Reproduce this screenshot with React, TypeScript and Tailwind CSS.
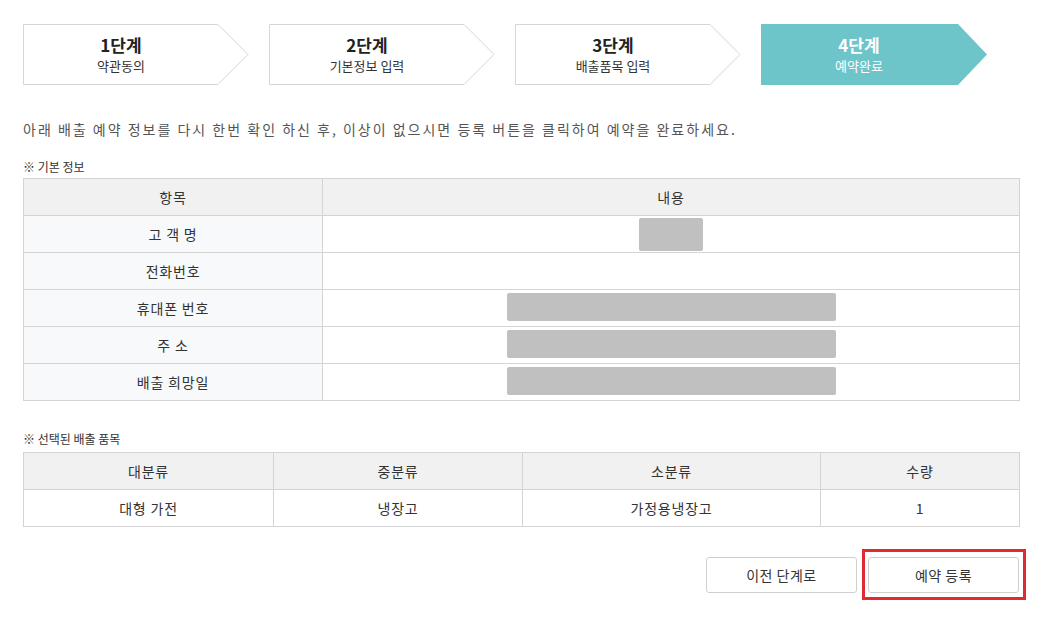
import React from 'react';

const steps = [
  { no: '1단계', label: '약관동의', active: false },
  { no: '2단계', label: '기본정보 입력', active: false },
  { no: '3단계', label: '배출품목 입력', active: false },
  { no: '4단계', label: '예약완료', active: true },
];

const Step: React.FC<{ no: string; label: string; active: boolean }> = ({ no, label, active }) => (
  <div className="relative w-[226px] h-[61px]">
    <svg className="absolute inset-0" width="226" height="61" viewBox="0 0 226 61">
      {active ? (
        <polygon points="0,0 197,0 226,30.5 197,61 0,61" fill="#6dc4c9" />
      ) : (
        <polygon
          points="0.5,0.5 195,0.5 225,30.5 195,60.5 0.5,60.5"
          fill="#ffffff"
          stroke="#d6d6d6"
          strokeWidth="1"
        />
      )}
    </svg>
    <div className={`relative flex flex-col items-center justify-center w-[196px] h-full ${active ? 'text-white' : 'text-[#222]'}`}>
      <span className="text-[17px] font-semibold leading-[22px]">{no}</span>
      <span className={`text-[13px] leading-[18px] mt-[1px] ${active ? 'text-white' : 'text-[#333]'}`}>{label}</span>
    </div>
  </div>
);

const wideBlock = <div className="w-[329px] h-[28px] bg-[#c0c0c0] rounded-[2px] mx-auto -mt-[3px]" />;

const basicRows: { label: string; block: React.ReactNode }[] = [
  { label: '고 객 명', block: <div className="w-[64px] h-[33px] bg-[#c0c0c0] rounded-[2px] mx-auto mt-[1px]" /> },
  { label: '전화번호', block: null },
  { label: '휴대폰 번호', block: wideBlock },
  { label: '주 소', block: wideBlock },
  { label: '배출 희망일', block: wideBlock },
];

const cell = 'border border-[#d4d4d4] text-center tracking-[0.8px]';

export default function App() {
  return (
    <div
      className="w-[1053px] h-[622px] bg-white text-[#333] pl-[23px] pt-[24px]"
      style={{ fontFamily: '"Noto Sans CJK KR", "Noto Sans", sans-serif' }}
    >
      <div className="w-[997px]">
        {/* steps */}
        <div className="flex gap-[20px]">
          {steps.map((s) => (
            <Step key={s.no} {...s} />
          ))}
        </div>

        <p className="mt-[34px] text-[14px] leading-[20px] text-[#555] tracking-[2px]">
          아래 배출 예약 정보를 다시 한번 확인 하신 후, 이상이 없으시면 등록 버튼을 클릭하여 예약을 완료하세요.
        </p>

        <div className="mt-[20px] text-[12px] leading-[16px] text-[#333]">※ 기본 정보</div>
        <table className="mt-[3px] w-full border-collapse text-[14px] text-[#333]">
          <thead>
            <tr className="h-[37px] bg-[#f1f1f1]">
              <th className={`w-[299px] font-normal ${cell}`}>항목</th>
              <th className={`font-normal ${cell}`}>내용</th>
            </tr>
          </thead>
          <tbody>
            {basicRows.map((r) => (
              <tr key={r.label} className="h-[37px]">
                <td className={`bg-[#f7f9fa] ${cell}`}>{r.label}</td>
                <td className={`align-middle ${cell}`}>{r.block}</td>
              </tr>
            ))}
          </tbody>
        </table>

        <div className="mt-[30px] text-[12px] leading-[16px] text-[#333]">※ 선택된 배출 품목</div>
        <table className="mt-[5px] w-full border-collapse text-[14px] text-[#333]">
          <thead>
            <tr className="h-[37px] bg-[#f1f1f1]">
              <th className={`w-[250px] font-normal ${cell}`}>대분류</th>
              <th className={`w-[249px] font-normal ${cell}`}>중분류</th>
              <th className={`w-[298px] font-normal ${cell}`}>소분류</th>
              <th className={`font-normal ${cell}`}>수량</th>
            </tr>
          </thead>
          <tbody>
            <tr className="h-[37px]">
              <td className={cell}>대형 가전</td>
              <td className={cell}>냉장고</td>
              <td className={cell}>가정용냉장고</td>
              <td className={cell}>1</td>
            </tr>
          </tbody>
        </table>

        <div className="mt-[30px] flex justify-end gap-[11px] pr-[1px]">
          <button className="w-[151px] h-[36px] border border-[#cfcfcf] rounded-[3px] bg-white text-[14px] text-[#333] tracking-[0.5px]">
            이전 단계로
          </button>
          <div className="relative">
            <button className="w-[151px] h-[36px] border border-[#cfcfcf] rounded-[3px] bg-white text-[14px] text-[#333] tracking-[0.5px]">
              예약 등록
            </button>
            <span className="absolute left-[-6px] right-[-7px] top-[-8px] bottom-[-7px] border-[3px] border-[#e02a32] pointer-events-none" />
          </div>
        </div>
      </div>
    </div>
  );
}
